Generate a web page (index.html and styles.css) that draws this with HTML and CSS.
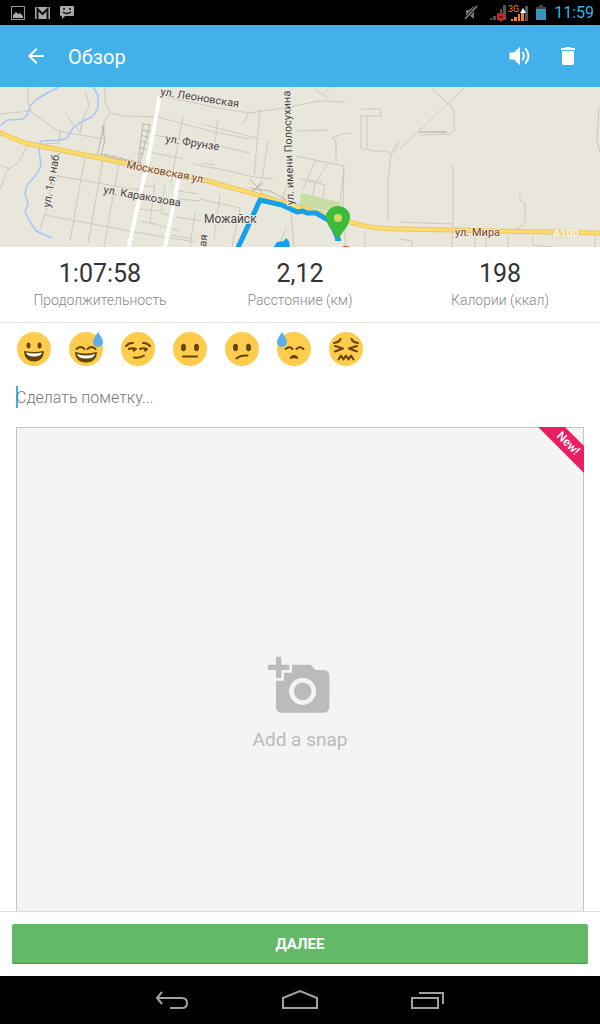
FILE: index.html
```
<!DOCTYPE html>
<html lang="ru">
<head>
  <meta charset="UTF-8" />
  <meta name="viewport" content="width=device-width, initial-scale=1.0" />
  <title>Обзор</title>
  <link rel="stylesheet" href="styles.css">
</head>
<body>
  <div class="status-bar">
    <div class="status-group">
      <svg width="14" height="14" viewBox="0 0 14 14"><path d="M.5.5h13v13H.5z" fill="none" stroke="#999"/><path d="M2 12V9l3-3 2 2 2-1 3 3v2z" fill="#aaa"/></svg>
      <svg width="15" height="12" viewBox="0 0 15 12"><path d="M0 0h15v12H0z" fill="#aaa"/><path d="M2.500 12V2l5 5 5-5v10" fill="none" stroke="#111" stroke-width="2"/></svg>
      <svg width="14" height="13" viewBox="0 0 14 13"><path d="M1 0h12q1 0 1 1v8q0 1-1 1H5l-3 3v-3H1q-1 0-1-1V1q0-1 1-1z" fill="#aaa"/><path d="M3 3h2M9 3h2M3 6q4 3 8 0" fill="none" stroke="#111" stroke-width="1.500"/></svg>
    </div>
    <div class="status-group status-right">
      <svg width="14" height="15" viewBox="0 0 14 15"><path d="M2 5h3l5-4v13l-5-4H2z" fill="#777"/><path d="M1 14L13 1" stroke="#000" stroke-width="3"/><path d="M1 14L13 1" stroke="#888" stroke-width="1.500"/></svg>
      <svg class="signal" width="16" height="16" viewBox="0 0 16 16"><path d="M0 13h2v2H0zM3 11h3v4H3zM7 8h2v7H7zM10 4h2v11h-2zM13 0h3v15h-3z" fill="#555"/><circle cx="11" cy="12" r="4" fill="#c4282d"/><path d="M9 12h4" stroke="#611" stroke-width="1.500"/></svg>
      <svg class="signal-3g" width="20" height="18" viewBox="0 0 20 18"><text class="net-label" x="0" y="8">3G</text><path d="M3 15h2v2H3zM6 13h3v4H6zM10 10h2v7h-2zM13 7h3v10h-3z" fill="#f58220"/><path d="M17 2h3v15h-3z" fill="#555"/><path d="M15 4l3 5h-6z" fill="#fff"/></svg>
      <svg class="battery" width="10" height="15" viewBox="0 0 10 15"><path d="M3 0h4v2h3v13H0V2h3z" fill="#444"/><path d="M0 4h10v11H0z" fill="#3a93b8"/></svg>
      <span class="clock">11:59</span>
    </div>
  </div>

  <header class="app-bar">
    <button class="icon-button" aria-label="Назад">
      <svg width="24" height="24" viewBox="0 0 24 24"><path d="M20 11H7.830l5.590-5.590L12 4l-8 8 8 8 1.410-1.410L7.830 13H20v-2z" fill="#fff"/></svg>
    </button>
    <h1 class="title">Обзор</h1>
    <button class="icon-button" aria-label="Звук">
      <svg width="28" height="28" viewBox="0 0 24 24"><path d="M3 9v6h4l5 5V4L7 9z" fill="#fff"/><path d="M14 8.500q2.500 3.500 0 7M16.500 5.500q5.500 6.500 0 13" fill="none" stroke="#fff" stroke-width="1.700"/></svg>
    </button>
    <button class="icon-button" aria-label="Удалить">
      <svg width="24" height="24" viewBox="0 0 24 24"><path d="M6 19c0 1.100.9 2 2 2h8c1.100 0 2-.9 2-2V7H6v12zM19 4h-3.500l-1-1h-5l-1 1H5v2h14V4z" fill="#fff"/></svg>
    </button>
  </header>

  <main class="content">
    <svg class="map" viewBox="0 0 600 160" preserveAspectRatio="xMidYMid slice" role="img" aria-label="Карта маршрута">
      <path class="river" d="M59 0l-10 5-12 7-7 7-3 9-4 4-16 1-8 7M93 0l5 8v14l-6 8-11 5-8 6-6 10-7 2-19 1-2 9 2 16-5 9-9 10-2 9 3 9-3 9 4 8 7 11 16 7"/>
      <g class="lane">
        <path d="M0 27l30-3 28 20 45 8M80 45l4-15 5-12-4-14M65 26l15 20 2-11M28 0v15l3 9M60 42l-1 14-31 2-10 18-11 7-7 20M0 78l10 4M105 0v16l5 9-6 10v20M110 26l14 3 34 1 52 14 40 8M52 88l92 16M85 70l-15 84M103 72l-15 84M119 76l-15 84M45 128l90 17 60 10M46 113l13-25M40 143l10-32"/>
        <path d="M153 48l28 4M149 65l34 7M183 30l-12 65M158 8l60 13 32 5 40-6 28-6 28 1M202 37l58 15M190 52l60 14M193 77l36 7 25 6M260 22l-6 68M268 54l-6 38M218 33l-4 28M249 24l-5 12M296 44l32-1M296 69l48 10-5 45M301 92l21 3M327 77l-12 20-5 25M316 72l-13 30M308 94l17 4-4 26M290 88l-8 26M255 90l18 2M202 76l13 2M200 112l40 9-8 39M220 107l-6 45M206 132l20 5M195 125l-5 35"/>
        <path d="M336 64v-9l-4-4 10-4 9-1M344 79l-1 40M336 55v20M361 22h20v7h-20v32l12 3h13l5 4 8-9M391 68l-3 25v40M367 29v32M400 62l65-62M391 66l9-13M432 2l20 18 2 5v18l-4 4-30 1M453 78v60l-1 22M400 135l52 2M520 107v7l5 2v18l-3 5-4 2v8M599 20l-2 32 3 14M315 2l14 10M330 0l-6 7M287 140l-9 20M291 125l3 35M345 130v30M365 146v14M400 152l12 2v6M475 147v13M486 147v13M508 148v12M533 149v9l20 2M595 149v11"/>
        <path d="M142 94l-5 28 22 2M155 96l-5 40 30 8M140 134l15 3M178 104l20 3M178 112l22 2M176 130l25 4M155 100l-16-2M165 98l-4 28 11 3M172 148l20 4"/>
      </g>
      <path class="rail" d="M104 38l-7 31 44 7M100 67l42 9M102 39l3 14-4 15M143 36l-5 40M150 37l-10 38M143 37l8 1M142 43l8 2M141 48l8 3M140 54l8 2M140 60l6 2M139 66l5 1M105 67l3 2M112 68l3 3M120 70l3 3M128 72l4 2M250 92l14 16M262 94l-10 12M250 101l20 3 20 11M250 106l13-10"/>
      <path d="M419 45h28" stroke="#aaa69c"/>
      <path d="M301 106l38 9 2 12-42-9z" fill="#c9dea6"/>
      <path class="street" d="M160 8l-12 65-20 90M179 90l-15 75"/>
      <path class="highway-edge" d="M-2 45l27 11 70 14 105 22 62 17 35 11 53 15q20 7 50 7l200 4"/>
      <path class="highway" d="M-2 45l27 11 70 14 105 22 62 17 35 11 53 15q20 7 50 7l200 4"/>
      <path class="route" d="M236 165l24-52 22 5 15 7 6-1 4 2 9 0 14 8 8 18"/>
      <path d="M273 161l4-6 7-1 2-3 3 3 1 7z" fill="#13a0ec"/>
      <path d="M342 160q4-2 8 0z" fill="#e53950"/>
      <path d="M338 154c-3-9-12-15-12-24a12 11 0 0 1 24 0c0 9-9 15-12 24z" fill="#3dbb3c"/>
      <path d="M335 151h6v3h-6z" fill="#13a0ec"/>
      <circle cx="338" cy="131" r="4" fill="#d9d66c"/>
      <g class="map-label">
        <text transform="translate(160 8) rotate(9)">ул. Леоновская</text>
        <text transform="translate(165 55) rotate(9)">ул. Фрунзе</text>
        <text transform="translate(103 106) rotate(10)">ул. Каракозова</text>
        <text transform="translate(50 121) rotate(-80)">ул. 1-я наб.</text>
        <text transform="translate(294 118) rotate(-92)">ул. имени Полосухина</text>
        <text transform="translate(206 160) rotate(-82)">ая</text>
        <text class="town" x="204" y="136">Можайск</text>
        <text class="main-road" transform="translate(126 81) rotate(11)">Московская ул.</text>
        <text class="main-road" x="455" y="149">ул. Мира</text>
        <text class="road-number" x="553" y="150">А100</text>
      </g>
    </svg>

    <section class="stats">
      <div class="stat"><span class="stat-value">1:07:58</span><span class="stat-label">Продолжительность</span></div>
      <div class="stat"><span class="stat-value">2,12</span><span class="stat-label">Расстояние (км)</span></div>
      <div class="stat"><span class="stat-value">198</span><span class="stat-label">Калории (ккал)</span></div>
    </section>

    <div class="moods">
      <button class="mood" aria-label="Отлично">
        <svg viewBox="0 0 34 34"><circle class="face" cx="17" cy="17" r="17"/><ellipse class="ink" cx="11.500" cy="13.500" rx="2" ry="3"/><ellipse class="ink" cx="22.500" cy="13.500" rx="2" ry="3"/><path class="ink" d="M7 20q0-1 1-1 9 2 18 0 1 0 1 1-1 9.500-10 9.500T7 20z"/><path d="M9 20.500q8 2 16 0-1 4-8 4t-8-4z" fill="#fff"/></svg>
      </button>
      <button class="mood" aria-label="Весело, но жарко">
        <svg viewBox="0 0 34 34"><circle class="face" cx="17" cy="17" r="17"/><path class="line" d="M7.500 17q4-4 8 0M18.500 17q4-4 8 0"/><path class="ink" d="M6 21q0-1 1-1 10 3 20 0 1 0 1 1-1 9.500-11 9.500T6 21z"/><path d="M8 22q9 3 18 0-1 4.500-9 4.500T8 22z" fill="#fff"/><path class="drop" d="M29 0q5 7 5 10a5 5 0 0 1-10 0q0-3 5-10z"/></svg>
      </button>
      <button class="mood" aria-label="Ухмылка">
        <svg viewBox="0 0 34 34"><circle class="face" cx="17" cy="17" r="17"/><path class="line" d="M5 14q3-3.500 7-3M22 11q4-.5 7 3M8 17q3-1.500 7 0M19 17q3-1.500 7 0M13 25.500q6 1 10-2"/><circle class="ink" cx="13" cy="18" r="1.600"/><circle class="ink" cx="24.500" cy="18" r="1.600"/></svg>
      </button>
      <button class="mood" aria-label="Нейтрально">
        <svg viewBox="0 0 34 34"><circle class="face" cx="17" cy="17" r="17"/><ellipse class="ink" cx="10.500" cy="15.500" rx="2.500" ry="3.700"/><ellipse class="ink" cx="23.500" cy="15.500" rx="2.500" ry="3.700"/><path class="line" d="M10 24.500h14"/></svg>
      </button>
      <button class="mood" aria-label="Сомнение">
        <svg viewBox="0 0 34 34"><circle class="face" cx="17" cy="17" r="17"/><ellipse class="ink" cx="10.500" cy="15.500" rx="2.500" ry="3.700"/><ellipse class="ink" cx="23.500" cy="15.500" rx="2.500" ry="3.700"/><path class="line" d="M11.500 26.500q4-3.500 11-3"/></svg>
      </button>
      <button class="mood" aria-label="Устал">
        <svg viewBox="0 0 34 34"><circle class="face" cx="17" cy="17" r="17"/><path class="line" d="M8.500 17q4-3.500 7 0M19.500 17q3-3.500 7 0"/><path class="ink" d="M12.500 27q1-4 4.500-4t4.500 4q-4.500-1.500-9 0z"/><path class="drop" d="M5 0q5 7 5 10a5 5 0 0 1-10 0q0-3 5-10z"/></svg>
      </button>
      <button class="mood" aria-label="Измучен">
        <svg viewBox="0 0 34 34"><circle class="face" cx="17" cy="17" r="17"/><path class="line" d="M5 11q5-.5 6.500-4M29 11q-5-.5-6.500-4M6 14l8 2.500L6 19.500M28 14l-8 2.500 8 3M9.500 27.500l2.500-4 2.500 4 2.500-4 2.500 4 2.500-4 2.500 4"/></svg>
      </button>
    </div>

    <input class="note" type="text" placeholder="Сделать пометку..." aria-label="Сделать пометку">

    <button class="snap">
      <svg width="64" height="64" viewBox="0 0 24 24"><path fill="#bbb" d="M3 4V1h2v3h3v2H5v3H3V6H0V4h3zm3 6V7h3V4h7l1.830 2H21c1.100 0 2 .9 2 2v12c0 1.100-.9 2-2 2H5c-1.100 0-2-.9-2-2V10h3zm7 9c2.760 0 5-2.240 5-5s-2.240-5-5-5-5 2.240-5 5 2.240 5 5 5z"/><circle cx="13" cy="14" r="5" fill="#f4f4f4"/><circle cx="13" cy="14" r="3.300" fill="#bbb"/></svg>
      <span>Add a snap</span>
      <span class="ribbon">New!</span>
    </button>
  </main>

  <footer class="footer">
    <button class="next">ДАЛЕЕ</button>
  </footer>

  <nav class="nav-bar">
    <button class="nav-button" aria-label="Назад">
      <svg width="34" height="20" viewBox="0 0 34 20"><path d="M7 2L2 8l5 6M2 8h25q5 0 5 5t-5 5H15" /></svg>
    </button>
    <button class="nav-button" aria-label="Домой">
      <svg width="36" height="20" viewBox="0 0 36 20"><path d="M1 18V8l17-7 17 7v10z"/></svg>
    </button>
    <button class="nav-button" aria-label="Недавние">
      <svg width="34" height="20" viewBox="0 0 34 20"><path d="M1 8h26v10H1zM8 3h24v11"/></svg>
    </button>
  </nav>
</body>
</html>
```

FILE: styles.css
```
* {
  box-sizing: border-box;
}
html, body {
  margin: 0;
  height: 100%;
}
body {
  display: flex;
  flex-direction: column;
  background: #fff;
  font-family: Roboto, "Noto Sans", sans-serif;
  overflow: hidden;
}
button {
  padding: 0;
  border: 0;
  background: none;
  font-family: inherit;
  cursor: pointer;
}
svg {
  display: block;
}

.status-bar {
  display: flex;
  flex: none;
  justify-content: space-between;
  align-items: center;
  height: 25px;
  padding: 0 6px 0 11px;
  background: #000;
}
.status-group {
  display: flex;
  align-items: center;
  gap: 10px;
}
.status-right {
  gap: 8px;
}
.signal {
  margin-left: 4px;
}
.signal-3g {
  margin-left: -6px;
}
.net-label {
  fill: #f58220;
  font-size: 9px;
}
.clock {
  color: #33b5e5;
  font-size: 16px;
  line-height: 24px;
}

.app-bar {
  display: flex;
  flex: none;
  align-items: center;
  gap: 16px;
  height: 62px;
  padding: 0 16px 0 20px;
  background: #42b0e9;
}
.icon-button {
  display: flex;
  justify-content: center;
  align-items: center;
  width: 32px;
  height: 32px;
}
.title {
  flex: 1;
  margin: 0;
  padding-top: 2px;
  color: #fff;
  font-size: 20px;
  font-weight: 400;
}

.content {
  flex: 1;
  min-height: 0;
  overflow: hidden;
}
.map {
  width: 100%;
  height: 160px;
  background: #e9e6dc;
}
.map path {
  stroke-linejoin: round;
}
.river, .lane, .rail, .street, .highway, .highway-edge, .route {
  fill: none;
}
.river {
  stroke: #a6c6f7;
  stroke-width: 1.5;
}
.lane {
  stroke: #cdc9bf;
}
.rail {
  stroke: #b9b5aa;
}
.street {
  stroke: #fff;
  stroke-width: 4;
}
.highway-edge {
  stroke: #eac665;
  stroke-width: 5;
}
.highway {
  stroke: #fddc6c;
  stroke-width: 3;
}
.route {
  stroke: #13a0ec;
  stroke-width: 5;
}
.map-label {
  fill: #444;
  stroke: #efebe2;
  stroke-width: 2px;
  paint-order: stroke;
  font-size: 11px;
}
.map-label .town {
  font-size: 12px;
}
.map-label .main-road {
  fill: #7d4412;
}
.map-label .road-number {
  fill: #fff;
  stroke: #e6cf88;
  stroke-width: 1px;
  font-weight: 500;
}

.stats {
  display: flex;
  padding: 12px 0 11px;
  border-bottom: 1px solid #e2e2e2;
}
.stat {
  display: flex;
  flex: 1;
  flex-direction: column;
  align-items: center;
}
.stat-value {
  color: #333;
  font-size: 25px;
  line-height: 30px;
}
.stat-label {
  color: #888;
  font-size: 14px;
  font-weight: 300;
  line-height: 22px;
}

.moods {
  display: flex;
  gap: 16px;
  padding: 8px 16px;
}
.mood {
  width: 36px;
  height: 36px;
  padding: 1px;
}
.face {
  fill: #ffcc4d;
}
.ink {
  fill: #664500;
}
.line {
  fill: none;
  stroke: #664500;
  stroke-width: 2;
  stroke-linecap: round;
  stroke-linejoin: round;
}
.drop {
  fill: #5dadec;
}

.note {
  display: block;
  width: calc(100% - 32px);
  height: 22px;
  margin: 11px 16px 19px;
  padding: 0;
  border: 0;
  outline: 0;
  background: linear-gradient(#42b0e9, #42b0e9) left / 2px 100% no-repeat;
  color: #333;
  font-family: inherit;
  font-size: 16px;
  font-weight: 300;
}
.note::placeholder {
  color: #777;
}

.snap {
  position: relative;
  display: flex;
  flex-direction: column;
  justify-content: center;
  align-items: center;
  gap: 10px;
  width: calc(100% - 32px);
  aspect-ratio: 1;
  margin: 0 16px;
  padding-bottom: 16px;
  overflow: hidden;
  background: #f4f4f4;
  box-shadow: inset 0 0 0 1px #c4c4c4;
  color: #bbb;
  font-size: 19px;
  line-height: 24px;
}
.ribbon {
  position: absolute;
  top: 7px;
  right: -24px;
  width: 80px;
  background: #e91e63;
  color: #fff;
  font-size: 12px;
  font-weight: 500;
  line-height: 19px;
  text-align: center;
  transform: rotate(45deg);
}

.footer {
  flex: none;
  padding: 12px;
  border-top: 1px solid #ddd;
}
.next {
  display: block;
  width: 100%;
  height: 40px;
  border-radius: 2px;
  background: #63b967;
  box-shadow: inset 0 -1px #4a9450;
  color: #fff;
  font-size: 15px;
  font-weight: 700;
}

.nav-bar {
  display: flex;
  flex: none;
  justify-content: center;
  gap: 64px;
  height: 48px;
  background: #000;
}
.nav-button {
  display: flex;
  justify-content: center;
  align-items: center;
  width: 64px;
}
.nav-button path {
  fill: none;
  stroke: #a0a0a0;
  stroke-width: 2;
}
```
